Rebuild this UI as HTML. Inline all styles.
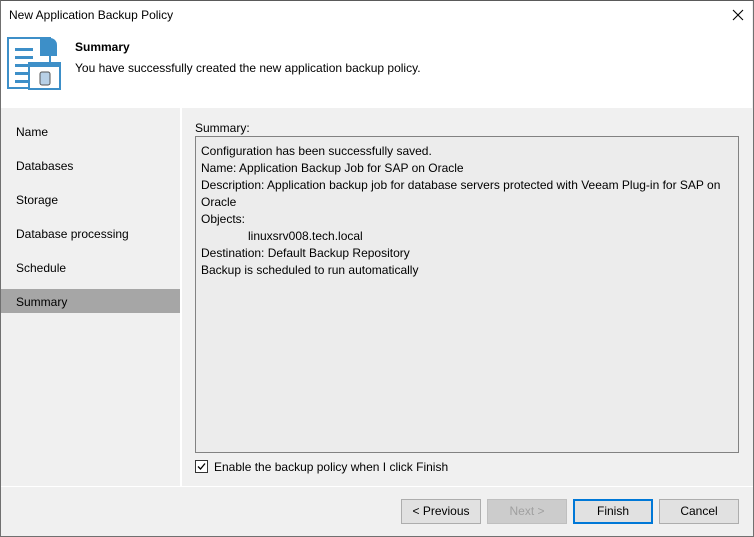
<!DOCTYPE html>
<html><head><meta charset="utf-8"><style>
*{margin:0;padding:0;box-sizing:border-box}
body{width:754px;height:537px;overflow:hidden;font-family:"Liberation Sans",sans-serif;font-size:12px;color:#000;background:#f0f0f0;position:relative}
.win{position:absolute;left:0;top:0;width:754px;height:537px;border:1px solid #707070;border-top-color:#5a5a5a}
.hdr{position:absolute;left:1px;top:1px;width:751px;height:107px;background:#fff}
.t{position:absolute;white-space:nowrap}
.nav{position:absolute;left:16px}
.btn{position:absolute;top:499px;height:25px;border:1px solid #adadad;background:#e1e1e1;text-align:center;line-height:23px}
</style></head><body>
<div class="win"></div>
<div class="hdr"></div>
<div class="t" style="left:9px;top:8px;font-size:12px">New Application Backup Policy</div>
<svg style="position:absolute;left:731px;top:8px" width="14" height="14"><path d="M2 2L12 12M12 2L2 12" stroke="#000" stroke-width="1.1"/></svg>
<svg style="position:absolute;left:6px;top:36px" width="56" height="54">
<path d="M2 2H44V52H2Z" fill="#fff" stroke="#3d8fc8" stroke-width="2"/>
<path d="M34 2H44a7 7 0 0 1 7 7V20H34Z" fill="#3d8fc8"/>
<rect x="9" y="12" width="18" height="3" fill="#3d8fc8"/>
<rect x="9" y="20" width="18" height="3" fill="#3d8fc8"/>
<rect x="9" y="28" width="14" height="3" fill="#3d8fc8"/>
<rect x="9" y="36" width="14" height="3" fill="#3d8fc8"/>
<rect x="9" y="44" width="14" height="3" fill="#3d8fc8"/>
<rect x="23" y="27" width="31" height="26" fill="#fff" stroke="#3d8fc8" stroke-width="2"/>
<rect x="23" y="27" width="31" height="4" fill="#3d8fc8"/>
<rect x="34" y="36" width="10" height="13" rx="2" fill="#b8d0e6" stroke="#555" stroke-width="1"/>
</svg>
<div class="t" style="left:75px;top:40px;font-weight:bold">Summary</div>
<div class="t" style="left:75px;top:61px">You have successfully created the new application backup policy.</div>
<div style="position:absolute;left:180px;top:108px;width:2px;height:378px;background:#fff"></div>
<div style="position:absolute;left:1px;top:289px;width:179px;height:24px;background:#a6a6a6"></div>
<div class="t nav" style="top:125px">Name</div>
<div class="t nav" style="top:159px">Databases</div>
<div class="t nav" style="top:193px">Storage</div>
<div class="t nav" style="top:227px">Database processing</div>
<div class="t nav" style="top:261px">Schedule</div>
<div class="t nav" style="top:295px">Summary</div>
<div class="t" style="left:195px;top:121px">Summary:</div>
<div style="position:absolute;left:195px;top:136px;width:544px;height:317px;border:1px solid #828282;background:#ececec"></div>
<div class="t" style="left:201px;top:143px;line-height:17px">Configuration has been successfully saved.<br>Name: Application Backup Job for SAP on Oracle<br>Description: Application backup job for database servers protected with Veeam Plug-in for SAP on<br>Oracle<br>Objects:<br><span style="padding-left:47px">linuxsrv008.tech.local</span><br>Destination: Default Backup Repository<br>Backup is scheduled to run automatically</div>
<div style="position:absolute;left:195px;top:460px;width:13px;height:13px;border:1px solid #333;background:#fff"></div>
<svg style="position:absolute;left:196px;top:461px" width="11" height="11"><path d="M2 5.5L4.5 8L9 2.5" stroke="#000" stroke-width="1.3" fill="none"/></svg>
<div class="t" style="left:214px;top:460px">Enable the backup policy when I click Finish</div>
<div style="position:absolute;left:1px;top:486px;width:752px;height:1px;background:#fff"></div>
<div class="btn" style="left:401px;width:80px">&lt; Previous</div>
<div class="btn" style="left:487px;width:80px;background:#cccccc;border-color:#bfbfbf;color:#a0a0a0">Next &gt;</div>
<div class="btn" style="left:573px;width:80px;border:2px solid #0078d7;line-height:21px">Finish</div>
<div class="btn" style="left:659px;width:80px">Cancel</div>
</body></html>
